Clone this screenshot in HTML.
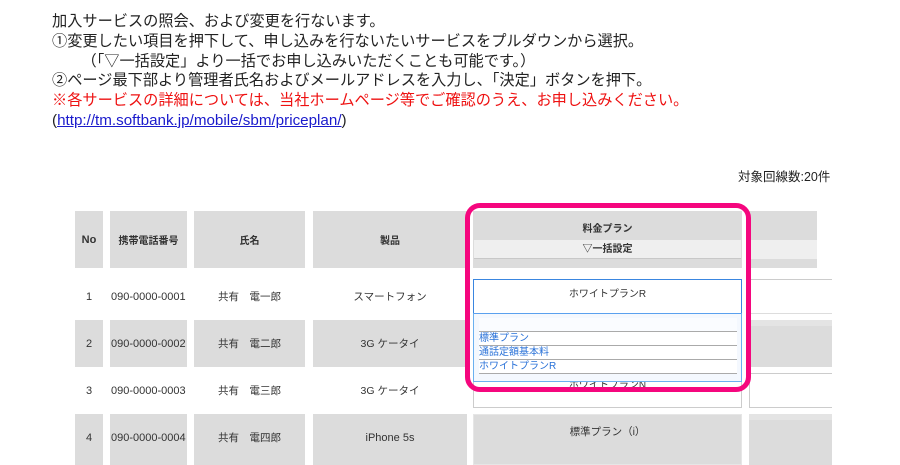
<!DOCTYPE html>
<html><head><meta charset="utf-8"><style>
*{margin:0;padding:0;box-sizing:border-box}
body{width:900px;height:465px;overflow:hidden;background:#fff;position:relative;font-family:"Liberation Sans","Noto Sans CJK JP",sans-serif;color:#222}
.a{position:absolute}
.intro{left:52px;top:12px;font-size:15.2px;line-height:19.8px;color:#222;white-space:nowrap}
.red{color:#ee1111}
.intro a{color:#1a1acc;text-decoration:underline}
.g{position:absolute;background:#dcdcdc}
.c{position:absolute;font-size:11px;color:#333;display:flex;align-items:center;justify-content:center;white-space:nowrap}
.h{font-weight:bold;font-size:10px}
.item{position:absolute;left:479px;width:258px;height:14px;font-size:10px;color:#2a72d8;line-height:14px;border-bottom:1px solid #aaa;background:#fff}
</style></head><body>
<div class="a intro">加入サービスの照会、および変更を行ないます。<br>①変更したい項目を押下して、申し込みを行ないたいサービスをプルダウンから選択。<br>&nbsp;&nbsp;&nbsp;&nbsp;&nbsp;&nbsp;&nbsp;（「▽一括設定」より一括でお申し込みいただくことも可能です。）<br>②ページ最下部より管理者氏名およびメールアドレスを入力し、「決定」ボタンを押下。<br><span class="red">※各サービスの詳細については、当社ホームページ等でご確認のうえ、お申し込みください。</span><br>(<a>http://tm.softbank.jp/mobile/sbm/priceplan/</a>)</div>
<div class="a" style="left:738px;top:166px;font-size:12.5px;color:#222">対象回線数:20件</div>

<!-- header -->
<div class="g" style="left:75px;top:211px;width:28px;height:57px"></div>
<div class="g" style="left:110px;top:211px;width:77px;height:57px"></div>
<div class="g" style="left:194px;top:211px;width:111px;height:57px"></div>
<div class="g" style="left:313px;top:211px;width:154px;height:57px"></div>
<div class="g" style="left:473px;top:211px;width:269px;height:57px"></div>
<div class="g" style="left:749px;top:211px;width:68px;height:57px"></div>
<div class="c h" style="left:75px;top:211px;width:28px;height:57px;font-size:11px">No</div>
<div class="c h" style="left:110px;top:211px;width:77px;height:57px">携帯電話番号</div>
<div class="c h" style="left:194px;top:211px;width:111px;height:57px">氏名</div>
<div class="c h" style="left:313px;top:211px;width:154px;height:57px">製品</div>
<div class="c h" style="left:473px;top:219px;width:269px;height:16px">料金プラン</div>
<div class="a" style="left:474px;top:240px;width:267px;height:19px;background:#efefef;border-bottom:1px solid #c8c8c8"></div>
<div class="c h" style="left:473px;top:240px;width:269px;height:14px">▽一括設定</div>
<div class="a" style="left:749px;top:240px;width:68px;height:19px;background:#efefef"></div>

<!-- row backgrounds -->
<div class="g" style="left:75px;top:320px;width:28px;height:47px"></div>
<div class="g" style="left:110px;top:320px;width:77px;height:47px"></div>
<div class="g" style="left:194px;top:320px;width:111px;height:47px"></div>
<div class="g" style="left:313px;top:320px;width:154px;height:47px"></div>
<div class="g" style="left:749px;top:320px;width:83px;height:47px;border-top:6px solid #e4e4e4"></div>
<div class="g" style="left:75px;top:414px;width:28px;height:51px"></div>
<div class="g" style="left:110px;top:414px;width:77px;height:51px"></div>
<div class="g" style="left:194px;top:414px;width:111px;height:51px"></div>
<div class="g" style="left:313px;top:414px;width:154px;height:51px"></div>
<div class="g" style="left:473px;top:414px;width:269px;height:51px;border:1px solid #e6e6e6"></div>
<div class="g" style="left:749px;top:414px;width:83px;height:51px;border-top:6px solid #e4e4e4"></div>

<!-- right column white cells -->
<div class="a" style="left:749px;top:279px;width:83px;height:35px;border-top:1px solid #ccc;border-bottom:1px solid #ddd"></div>
<div class="a" style="left:749px;top:373px;width:83px;height:35px;border:1px solid #ccc;border-right:none"></div>
<div class="a" style="left:473px;top:373px;width:269px;height:35px;border:1px solid #ccc"></div>
<div class="c" style="left:473px;top:376px;width:269px;height:14px;font-size:10px">ホワイトプランN</div>
<div class="c" style="left:473px;top:424px;width:269px;height:14px;font-size:10.5px">標準プラン（i）</div>

<!-- row texts -->
<div class="c" style="left:75px;top:280px;width:28px;height:33px">1</div>
<div class="c" style="left:111px;top:280px;width:80px;height:33px;justify-content:flex-start">090-0000-0001</div>
<div class="c" style="left:194px;top:280px;width:111px;height:33px;font-size:10.5px">共有　電一郎</div>
<div class="c" style="left:313px;top:280px;width:154px;height:33px;font-size:10.5px">スマートフォン</div>
<div class="c" style="left:75px;top:320px;width:28px;height:47px">2</div>
<div class="c" style="left:111px;top:320px;width:80px;height:47px;justify-content:flex-start">090-0000-0002</div>
<div class="c" style="left:194px;top:320px;width:111px;height:47px;font-size:10.5px">共有　電二郎</div>
<div class="c" style="left:313px;top:320px;width:154px;height:47px;font-size:10.5px">3G ケータイ</div>
<div class="c" style="left:75px;top:374px;width:28px;height:33px">3</div>
<div class="c" style="left:111px;top:374px;width:80px;height:33px;justify-content:flex-start">090-0000-0003</div>
<div class="c" style="left:194px;top:374px;width:111px;height:33px;font-size:10.5px">共有　電三郎</div>
<div class="c" style="left:313px;top:374px;width:154px;height:33px;font-size:10.5px">3G ケータイ</div>
<div class="c" style="left:75px;top:414px;width:28px;height:47px">4</div>
<div class="c" style="left:111px;top:414px;width:80px;height:47px;justify-content:flex-start">090-0000-0004</div>
<div class="c" style="left:194px;top:414px;width:111px;height:47px;font-size:10.5px">共有　電四郎</div>
<div class="c" style="left:313px;top:414px;width:154px;height:47px">iPhone 5s</div>

<!-- select -->
<div class="a" style="left:473px;top:279px;width:269px;height:35px;background:#fff;border:1px solid #3a86e0;border-bottom:1px solid #5aa0ee"></div>
<div class="c" style="left:473px;top:285px;width:269px;height:14px;font-size:10px">ホワイトプランR</div>
<div class="a" style="left:473px;top:313px;width:269px;height:69px;background:#f4f8fe;border:1px solid #6ab0f0;border-top:1px solid #5aa0ee"></div>
<div class="item" style="top:318px;background:#fafcff"></div>
<div class="item" style="top:332px">標準プラン</div>
<div class="item" style="top:346px">通話定額基本料</div>
<div class="item" style="top:360px">ホワイトプランR</div>

<!-- highlight -->
<div class="a" style="left:465px;top:203px;width:286px;height:189px;border:5px solid #f5067e;border-radius:15px"></div>
</body></html>
